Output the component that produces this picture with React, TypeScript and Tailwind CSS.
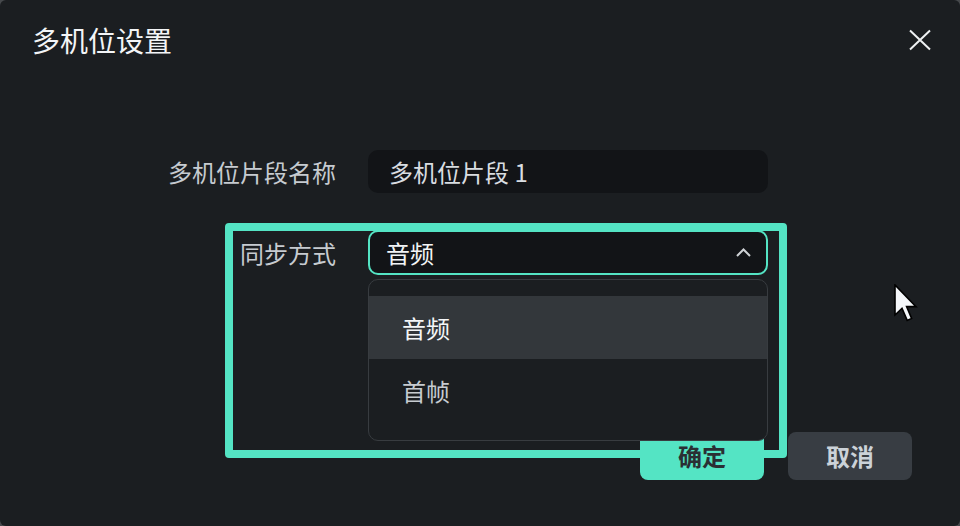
const font = { fontFamily: '"Noto Sans CJK SC", "Noto Sans", sans-serif' };

function Cursor() {
  return (
    <svg className="absolute left-[894px] top-[284px] z-30" width="24" height="38" viewBox="0 0 12 19">
      <path
        d="M0.5 0.5 L0.5 15.5 L4 12.2 L6.6 18.2 L8.8 17.2 L6.3 11.3 L11 11.3 Z"
        fill="#f4f7fa"
        stroke="#000"
        strokeWidth="0.8"
        strokeLinejoin="miter"
      />
    </svg>
  );
}

export default function App() {
  return (
    <div className="w-[960px] h-[526px] bg-[#46494c]" style={font}>
      <div className="relative w-full h-full rounded-[6px] bg-[#1b1e21] flex flex-col">
        {/* header */}
        <div className="h-[80px] flex items-center justify-between pl-[32px] pr-[28px]">
          <h1 className="text-[28px] leading-none text-[#f3f5f7] font-normal">多机位设置</h1>
          <button className="w-[24px] h-[24px] flex items-center justify-center text-[#eef1f3]">
            <svg width="24" height="24" viewBox="0 0 24 24" fill="none" stroke="currentColor" strokeWidth="2">
              <path d="M2 2.5 L22 21.5 M22 2.5 L2 21.5" />
            </svg>
          </button>
        </div>

        {/* form */}
        <div className="pt-[70px] pl-[168px] grid grid-cols-[168px_400px] gap-x-[32px] gap-y-[37px] items-center">
          <div className="text-[24px] leading-none text-[#c6cbd0] text-right whitespace-nowrap">多机位片段名称</div>
          <div className="h-[43px] rounded-[10px] bg-[#121417] flex items-center pl-[21px] text-[24px] leading-none text-[#d9dde1]">
            多机位片段 1
          </div>

          <div className="text-[24px] leading-none text-[#c6cbd0] text-right">同步方式</div>
          <div className="relative">
            <div className="h-[45px] rounded-[10px] bg-[#121417] border-2 border-[#54e4c4] flex items-center justify-between pl-[16px] pr-[15px]">
              <span className="text-[24px] leading-none text-[#f2f4f6]">音频</span>
              <svg width="15" height="9" viewBox="0 0 15 9" fill="none" stroke="#cfd3d6" strokeWidth="2">
                <path d="M1 8 L7.5 1.5 L14 8" />
              </svg>
            </div>
            <div className="absolute left-0 right-0 top-[49px] h-[162px] z-20 rounded-[10px] border border-[#383c40] bg-[#1b1e21] pt-[16px]">
              <div className="h-[63px] bg-[#33373b] flex items-center pl-[33px] text-[24px] leading-none text-[#f4f6f8]">
                音频
              </div>
              <div className="h-[64px] flex items-center pl-[33px] text-[24px] leading-none text-[#c6cbd0]">
                首帧
              </div>
            </div>
          </div>
        </div>

        {/* footer */}
        <div className="mt-auto flex justify-end gap-[24px] pr-[48px] pb-[46px]">
          <button className="relative z-10 w-[124px] h-[48px] rounded-[8px] bg-[#54e4c4] text-[24px] leading-none font-bold text-[#2a2f34]">
            确定
          </button>
          <button className="relative z-10 w-[124px] h-[48px] rounded-[8px] bg-[#383d43] text-[24px] leading-none font-bold text-[#cbd2d8]">
            取消
          </button>
        </div>

        {/* annotation frame */}
        <div className="absolute left-[225px] top-[223px] w-[562px] h-[235px] border-[8px] border-[#54e4c4] rounded-[4px]" />

        <Cursor />
      </div>
    </div>
  );
}
